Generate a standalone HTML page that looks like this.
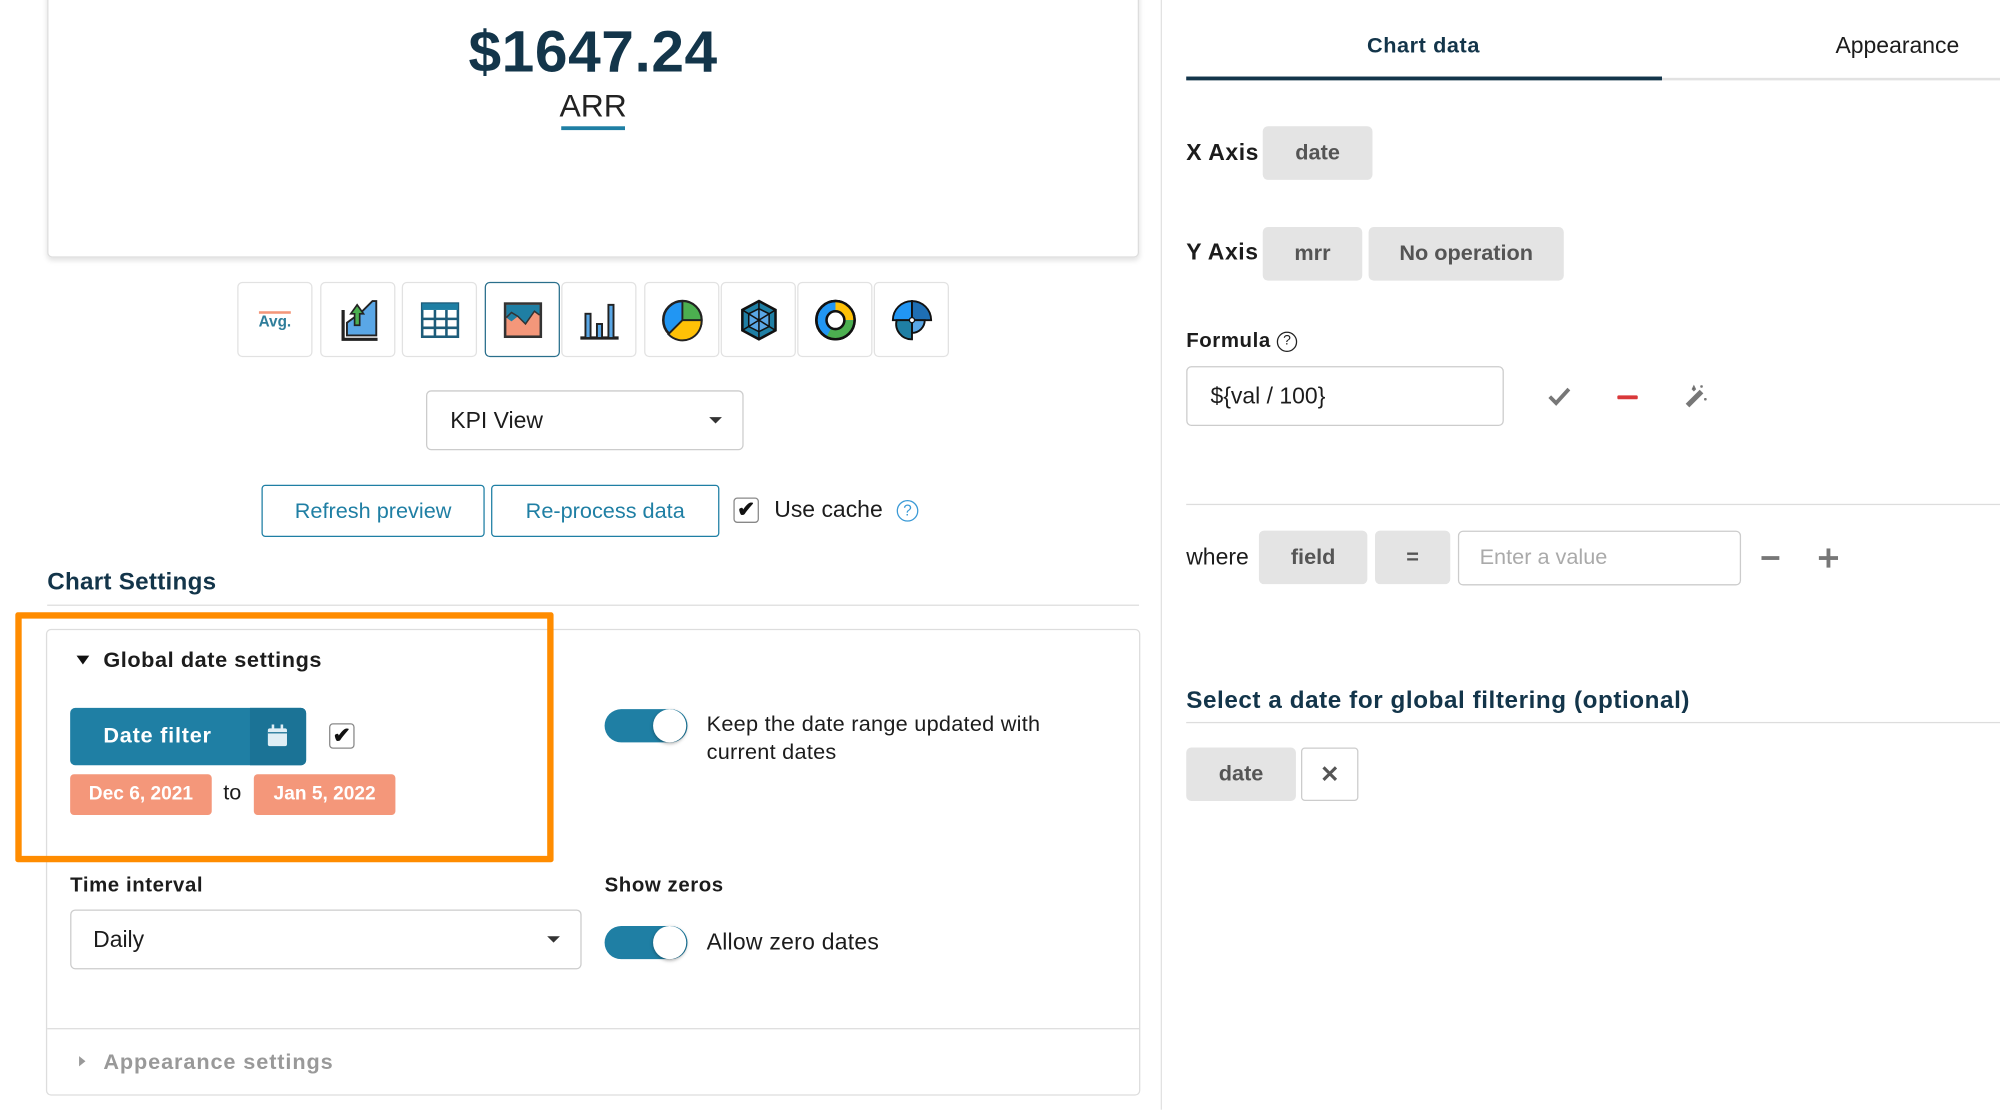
<!DOCTYPE html>
<html><head><meta charset="utf-8"><style>
*{box-sizing:border-box;margin:0;padding:0}
html,body{width:2000px;height:1110px;overflow:hidden;background:#fff}
#w{width:1568px;height:870px;position:relative;transform:scale(1.27551);transform-origin:0 0;font-family:"Liberation Sans",sans-serif;color:#1c1c1c}
.a{position:absolute}
.t{position:absolute;white-space:nowrap;transform:translateY(-50%)}
.b{font-weight:bold;letter-spacing:.45px}
.dk{color:#13354a}
.ib{position:absolute;top:221px;height:59px;border:1px solid #e2e2e2;border-radius:4px;background:#fff;display:flex;align-items:center;justify-content:center}
.pill{position:absolute;background:#e4e4e4;border-radius:4px;display:flex;align-items:center;justify-content:center;font-weight:bold;color:#555;font-size:17px}
.tog{position:absolute;width:65px;height:26px;border-radius:13px;background:#1f7fa4}
.tog:after{content:"";position:absolute;right:1px;top:0;width:26px;height:26px;border-radius:50%;background:#fff;box-shadow:0 1px 3px rgba(0,0,0,.35)}
.cb{position:absolute;width:20px;height:20px;border:1px solid #888;border-radius:3px;background:#fff;font-size:17px;line-height:18px;text-align:center;font-weight:bold;color:#111}
</style></head><body><div id="w">
<div class="a" style="left:37px;top:-10px;width:856px;height:212px;border:1px solid #ddd;border-radius:4px;box-shadow:0 2px 4px rgba(0,0,0,.12)"></div>
<div class="t b dk" style="left:465px;top:40px;transform:translate(-50%,-50%);font-size:46px">$1647.24</div>
<div class="t" style="left:465px;top:84px;transform:translate(-50%,-50%);font-size:25px;color:#222">ARR</div>
<div class="a" style="left:440px;top:99px;width:50px;height:3px;background:#1f7fa4"></div>

<div class="ib" style="left:186px;width:59px"><span style="font-size:12px;font-weight:bold;color:#2e7d9a;border-top:2px solid #f4977a;line-height:12px">Avg.</span></div>
<div class="ib" style="left:251px;width:59px"><svg width="36" height="36" viewBox="0 0 36 36"><path d="M6 10V33H33" fill="none" stroke="#222" stroke-width="2.5"/><path d="M9 30V20L20 12L29 3H32V30Z" fill="#5aa7e6" stroke="#222" stroke-width="1.5"/><path d="M15 22V13H12L17 6L22 13H19V22Z" fill="#4caf50" stroke="#222" stroke-width="1.3"/></svg></div>
<div class="ib" style="left:315px;width:59px"><svg width="32" height="32" viewBox="0 0 32 32"><rect x="2" y="3" width="28" height="26" fill="#fff" stroke="#1d5c7a" stroke-width="2"/><rect x="2" y="3" width="28" height="5" fill="#1f7fa4"/><path d="M2 15H30M2 22H30M12 8V29M21 8V29" stroke="#1d5c7a" stroke-width="2"/></svg></div>
<div class="ib" style="left:380px;width:59px;border-color:#2a6f8c"><svg width="32" height="32" viewBox="0 0 32 32"><rect x="2" y="3" width="28" height="26" fill="#f4977a" stroke="#333" stroke-width="2"/><path d="M3 4H29V12L25 9L18 19L12 13L7 17L3 14Z" fill="#1f7fa4"/><path d="M3 14L7 10L12 13L18 19L25 9L29 12" fill="none" stroke="#333" stroke-width="1.2"/></svg></div>
<div class="ib" style="left:440px;width:59px"><svg width="34" height="32" viewBox="0 0 34 32"><path d="M2 30H32" stroke="#222" stroke-width="2.5"/><rect x="6" y="11" width="4" height="19" fill="#5aa7e6" stroke="#222" stroke-width="1.5"/><rect x="15" y="19" width="4" height="11" fill="#5aa7e6" stroke="#222" stroke-width="1.5"/><rect x="24" y="4" width="4" height="26" fill="#5aa7e6" stroke="#222" stroke-width="1.5"/></svg></div>
<div class="ib" style="left:505px;width:59px"><svg width="34" height="34" viewBox="0 0 34 34"><circle cx="17" cy="17" r="15" fill="#2196f3" stroke="#222" stroke-width="2"/><path d="M17 17V2A15 15 0 0 1 32 17Z" fill="#4caf50" stroke="#222" stroke-width="1.5"/><path d="M17 17H32A15 15 0 0 1 6 28Z" fill="#ffc107" stroke="#222" stroke-width="1.5"/></svg></div>
<div class="ib" style="left:565px;width:59px"><svg width="34" height="34" viewBox="0 0 34 34"><polygon points="17,2 30,9 30,25 17,32 4,25 4,9" fill="#1f7fa4" stroke="#111" stroke-width="2"/><polygon points="17,8 25,12 25,22 17,26 9,22 9,12" fill="#5aa7e6" stroke="#111" stroke-width="1.2"/><path d="M17 2V32M4 9L30 25M30 9L4 25" stroke="#111" stroke-width="1.2"/></svg></div>
<div class="ib" style="left:625px;width:59px"><svg width="34" height="34" viewBox="0 0 34 34"><circle cx="17" cy="17" r="15" fill="#2196f3" stroke="#111" stroke-width="2"/><path d="M17 2A15 15 0 0 1 32 17H17Z" fill="#ffc107"/><path d="M32 17A15 15 0 0 1 10 30L17 17Z" fill="#4caf50"/><circle cx="17" cy="17" r="15" fill="none" stroke="#111" stroke-width="2"/><circle cx="17" cy="17" r="7" fill="#fff" stroke="#111" stroke-width="2"/></svg></div>
<div class="ib" style="left:685px;width:59px"><svg width="34" height="34" viewBox="0 0 34 34"><path d="M17 17H2A15 15 0 0 1 17 2Z" fill="#2196f3" stroke="#111" stroke-width="1.5"/><path d="M17 17V2A15 15 0 0 1 32 17Z" fill="#1f6fb4" stroke="#111" stroke-width="1.5"/><path d="M17 17H27A10 10 0 0 1 17 27Z" fill="#5aa7e6" stroke="#111" stroke-width="1.5"/><path d="M17 17V32A12 12 0 0 1 5 17Z" fill="#1f7fa4" stroke="#111" stroke-width="1.5"/><circle cx="17" cy="17" r="2" fill="#fff" stroke="#111"/></svg></div>

<div class="a" style="left:334px;top:306px;width:249px;height:47px;border:1px solid #ccc;border-radius:4px"></div>
<div class="t" style="left:353px;top:330px;font-size:18px">KPI View</div>
<div class="a" style="left:556px;top:327px;border:5px solid transparent;border-top:5px solid #333;border-bottom:0"></div>

<div class="a" style="left:205px;top:380px;width:175px;height:41px;border:1px solid #1f7fa4;border-radius:3px;color:#1f7fa4;font-size:17px;text-align:center;line-height:39px">Refresh preview</div>
<div class="a" style="left:385px;top:380px;width:179px;height:41px;border:1px solid #1f7fa4;border-radius:3px;color:#1f7fa4;font-size:17px;text-align:center;line-height:39px">Re-process data</div>
<div class="cb" style="left:575px;top:390px">✔</div>
<div class="t" style="left:607px;top:400px;font-size:18px">Use cache</div>
<div class="a" style="left:703px;top:392px;width:17px;height:17px;border:1.5px solid #3b9ad6;border-radius:50%;color:#3b9ad6;font-size:12px;text-align:center;line-height:14px">?</div>

<div class="t b dk" style="left:37px;top:457px;font-size:19px;letter-spacing:.2px">Chart Settings</div>
<div class="a" style="left:37px;top:474px;width:856px;height:1px;background:#ddd"></div>

<div class="a" style="left:36px;top:493px;width:858px;height:366px;border:1px solid #ddd;border-radius:4px"></div>
<div class="a" style="left:60px;top:514px;border:5px solid transparent;border-top:7px solid #111;border-bottom:0"></div>
<div class="t b" style="left:81px;top:518px;font-size:17px">Global date settings</div>
<div class="a" style="left:55px;top:555px;width:185px;height:45px;background:#1f7fa4;border-radius:4px"></div>
<div class="a" style="left:196px;top:555px;width:44px;height:45px;background:#1b7396;border-radius:0 4px 4px 0"></div>
<div class="t b" style="left:81px;top:577px;font-size:17px;color:#fff;letter-spacing:.6px">Date filter</div>
<svg class="a" style="left:209px;top:567px" width="17" height="19" viewBox="0 0 17 19"><rect x="1" y="4" width="15" height="14" rx="1.5" fill="#dfeef5"/><rect x="4" y="1" width="2" height="5" fill="#dfeef5"/><rect x="11" y="1" width="2" height="5" fill="#dfeef5"/><rect x="1" y="7" width="15" height="1" fill="#1b7396"/></svg>
<div class="cb" style="left:258px;top:567px">✔</div>
<div class="a b" style="left:55px;top:607px;width:111px;height:32px;background:#f4977a;border-radius:3px;color:#fff;font-size:15px;text-align:center;line-height:32px;letter-spacing:0">Dec 6, 2021</div>
<div class="t" style="left:175px;top:622px;font-size:17px">to</div>
<div class="a b" style="left:199px;top:607px;width:111px;height:32px;background:#f4977a;border-radius:3px;color:#fff;font-size:15px;text-align:center;line-height:32px;letter-spacing:0">Jan 5, 2022</div>
<div class="a" style="left:12px;top:480px;width:422px;height:196px;border:5px solid #ff8c00;border-radius:2px"></div>

<div class="tog" style="left:474px;top:556px"></div>
<div class="t" style="left:554px;top:568px;font-size:17px;letter-spacing:.2px">Keep the date range updated with</div>
<div class="t" style="left:554px;top:590px;font-size:17px;letter-spacing:.2px">current dates</div>

<div class="t b" style="left:55px;top:695px;font-size:16px">Time interval</div>
<div class="a" style="left:55px;top:713px;width:401px;height:47px;border:1px solid #ccc;border-radius:4px"></div>
<div class="t" style="left:73px;top:737px;font-size:18px">Daily</div>
<div class="a" style="left:429px;top:734px;border:5px solid transparent;border-top:5px solid #333;border-bottom:0"></div>
<div class="t b" style="left:474px;top:695px;font-size:16px">Show zeros</div>
<div class="tog" style="left:474px;top:726px"></div>
<div class="t" style="left:554px;top:739px;font-size:18px;letter-spacing:.2px">Allow zero dates</div>

<div class="a" style="left:37px;top:806px;width:856px;height:1px;background:#ddd"></div>
<div class="a" style="left:62px;top:828px;border:4px solid transparent;border-left:5px solid #999;border-right:0"></div>
<div class="t b" style="left:81px;top:833px;font-size:17px;color:#999;letter-spacing:.7px">Appearance settings</div>

<div class="a" style="left:910px;top:0;width:1px;height:870px;background:#e2e2e2"></div>

<div class="t b dk" style="left:1116px;top:36px;transform:translate(-50%,-50%);font-size:17px">Chart data</div>
<div class="t" style="left:1439px;top:36px;font-size:18px">Appearance</div>
<div class="a" style="left:930px;top:61px;width:638px;height:2px;background:#e2e2e2"></div>
<div class="a" style="left:930px;top:60px;width:373px;height:3px;background:#13354a"></div>

<div class="t b" style="left:930px;top:120px;font-size:18px">X Axis</div>
<div class="pill" style="left:990px;top:99px;width:86px;height:42px">date</div>
<div class="t b" style="left:930px;top:198px;font-size:18px">Y Axis</div>
<div class="pill" style="left:990px;top:178px;width:78px;height:42px">mrr</div>
<div class="pill" style="left:1073px;top:178px;width:153px;height:42px">No operation</div>

<div class="t b" style="left:930px;top:268px;font-size:16px">Formula</div>
<div class="a" style="left:1001px;top:260px;width:16px;height:16px;border:1.5px solid #222;border-radius:50%;font-size:11px;text-align:center;line-height:13px">?</div>
<div class="a" style="left:930px;top:287px;width:249px;height:47px;border:1px solid #ccc;border-radius:4px"></div>
<div class="t" style="left:949px;top:311px;font-size:18px">${val / 100}</div>
<svg class="a" style="left:1213px;top:303px" width="19" height="16" viewBox="0 0 19 16"><path d="M2 8L7 13L17 2" fill="none" stroke="#777" stroke-width="3"/></svg>
<div class="a" style="left:1268px;top:310px;width:16px;height:3px;background:#d9383a;border-radius:1px"></div>
<svg class="a" style="left:1320px;top:301px" width="20" height="20" viewBox="0 0 20 20"><path d="M3 17L14 6" stroke="#777" stroke-width="4"/><path d="M8 2L9 4L8 5L7 4ZM14 1V3M13 2H15M17 11V13M16 12H18" stroke="#777" stroke-width="1.3"/></svg>

<div class="a" style="left:930px;top:395px;width:638px;height:1px;background:#ddd"></div>
<div class="t" style="left:930px;top:437px;font-size:18px">where</div>
<div class="pill" style="left:987px;top:416px;width:85px;height:42px">field</div>
<div class="pill" style="left:1078px;top:416px;width:59px;height:42px">=</div>
<div class="a" style="left:1143px;top:416px;width:222px;height:43px;border:1px solid #ccc;border-radius:4px"></div>
<div class="t" style="left:1160px;top:437px;font-size:17px;color:#aaa">Enter a value</div>
<div class="a" style="left:1381px;top:436px;width:14px;height:2.5px;background:#777"></div>
<div class="a" style="left:1426px;top:436px;width:15px;height:2.5px;background:#777"></div>
<div class="a" style="left:1432px;top:430px;width:2.5px;height:15px;background:#777"></div>

<div class="t b dk" style="left:930px;top:550px;font-size:19px">Select a date for global filtering (optional)</div>
<div class="a" style="left:930px;top:566px;width:638px;height:1px;background:#ddd"></div>
<div class="pill" style="left:930px;top:586px;width:86px;height:42px">date</div>
<div class="a" style="left:1020px;top:586px;width:45px;height:42px;border:1px solid #ccc;border-radius:3px;text-align:center;line-height:40px;font-size:18px;color:#555;font-weight:bold">✕</div>
</div></body></html>
